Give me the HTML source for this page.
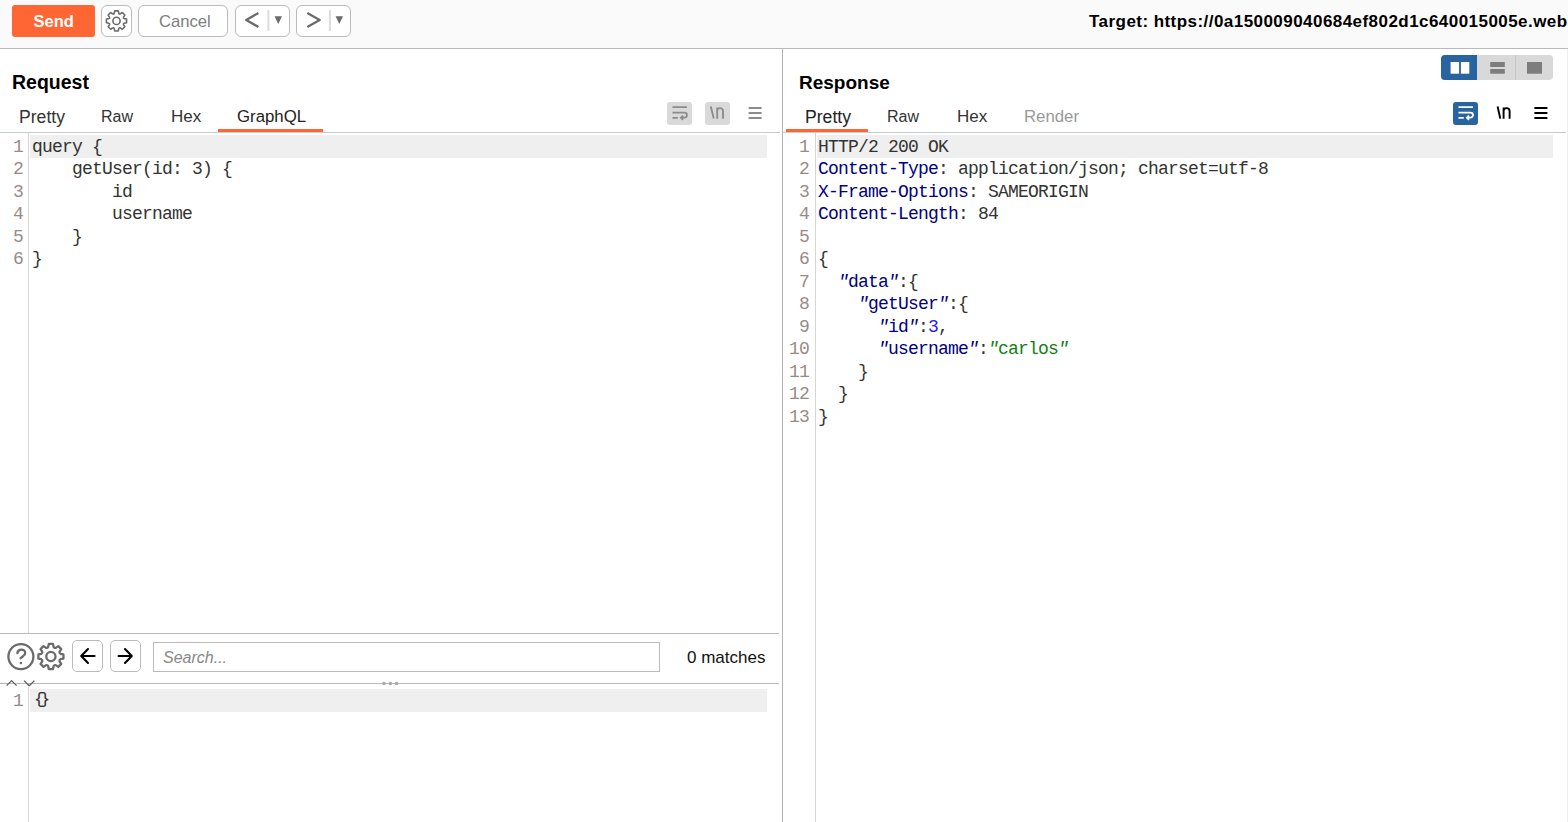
<!DOCTYPE html>
<html><head><meta charset="utf-8">
<style>
*{box-sizing:border-box;margin:0;padding:0}
html,body{width:1568px;height:822px;overflow:hidden;background:#fff;font-family:"Liberation Sans",sans-serif;color:#222}
.a{position:absolute}
svg{position:absolute;left:0;top:0;overflow:visible}
#top{left:0;top:0;width:1568px;height:48px;background:#fafafa}
#topline{left:0;top:48px;width:1568px;height:1px;background:#bdb8b8}
.btn{position:absolute;top:5px;height:32px;border:1.5px solid #bfbaba;border-radius:6px;background:#fff}
.txt{position:absolute;white-space:pre;line-height:1}
.tab{position:absolute;top:109px;font-size:16px;white-space:pre;line-height:1;color:#333}
.code{position:absolute;font-family:"Liberation Mono",monospace;font-size:18px;letter-spacing:-0.8px;white-space:pre;line-height:22.5px;color:#333}
.ln{position:absolute;font-family:"Liberation Mono",monospace;font-size:18px;letter-spacing:-0.8px;white-space:pre;line-height:22.5px;color:#978b86;text-align:right}
.hl{position:absolute;background:#efefef}
.vline{position:absolute;width:1px;background:#d6d6d6}
.hn{color:#000080}
.k{color:#000080}
.nb{color:#1c1cf0}
.st{color:#108010}
.code i{font-style:italic}
</style></head><body>
<div class="a" id="top"></div>
<div class="a" id="topline"></div>

<!-- Send -->
<div class="a" style="left:12px;top:5px;width:83px;height:32px;background:#ff6633;border-radius:3px"></div>
<div class="txt" style="left:33.5px;top:12.8px;font-size:16.5px;font-weight:700;color:#fff">Send</div>
<!-- gear btn -->
<div class="btn" style="left:101px;width:31px"></div>
<!-- cancel -->
<div class="btn" style="left:138px;width:90px"></div>
<div class="txt" style="left:159px;top:13.5px;font-size:16.6px;color:#7e7e7e">Cancel</div>
<!-- back/fwd -->
<div class="btn" style="left:235px;width:55px"></div>
<div class="btn" style="left:296px;width:55px"></div>

<div class="txt" style="left:1089px;top:13px;font-size:17px;font-weight:700;color:#000;letter-spacing:0.45px">Target: https://0a150009040684ef802d1c640015005e.web</div>

<!-- Request pane -->
<div class="txt" style="left:12px;top:73px;font-size:19.5px;font-weight:700;color:#000">Request</div>
<div class="tab" style="left:19px;top:108.5px;font-size:17.6px">Pretty</div>
<div class="tab" style="left:101px">Raw</div>
<div class="tab" style="left:171px;font-size:17px;top:108px">Hex</div>
<div class="tab" style="left:237px;font-size:16.8px;top:108.5px;color:#222">GraphQL</div>
<div class="a" style="left:0;top:132px;width:780px;height:1px;background:#c9cccc"></div>
<div class="a" style="left:218px;top:129px;width:105px;height:3px;background:#ff6633"></div>

<div class="a" style="left:667px;top:102px;width:25px;height:23px;background:#d9d9d9;border-radius:3px"></div>
<div class="a" style="left:705px;top:102px;width:25px;height:23px;background:#d9d9d9;border-radius:3px"></div>

<div class="vline" style="left:28px;top:133px;height:500px"></div>
<div class="hl" style="left:30px;top:135px;width:737px;height:23px"></div>
<div class="ln" style="left:0;top:135.5px;width:23px">1
2
3
4
5
6</div>
<div class="code" style="left:32px;top:135.5px">query {
    getUser(id: 3) {
        id
        username
    }
}</div>

<!-- search bar -->
<div class="a" style="left:0;top:633px;width:779px;height:1px;background:#bdb8b8"></div>
<div class="a" style="left:0;top:683px;width:779px;height:1px;background:#bdb8b8"></div>
<div class="btn" style="left:72px;top:640px;width:31px;height:32px;border-radius:5px"></div>
<div class="btn" style="left:110px;top:640px;width:31px;height:32px;border-radius:5px"></div>
<div class="a" style="left:153px;top:642px;width:507px;height:30px;border:1.5px solid #bfbaba;background:#fff"></div>
<div class="txt" style="left:163px;top:650px;font-size:16px;font-style:italic;color:#888">Search...</div>
<div class="txt" style="left:687px;top:649px;font-size:17px;color:#111">0 matches</div>

<div class="vline" style="left:28px;top:687px;height:135px"></div>
<div class="hl" style="left:30px;top:689px;width:737px;height:23px"></div>
<div class="ln" style="left:0;top:689.5px;width:23px">1</div>
<div class="code" style="left:34px;top:689px;font-size:17.4px;letter-spacing:-4.6px">{}</div>

<!-- divider -->
<div class="a" style="left:782px;top:49px;width:1px;height:773px;background:#b8b3b3"></div>

<!-- Response pane -->
<div class="txt" style="left:799px;top:72.5px;font-size:19px;font-weight:700;color:#000">Response</div>
<div class="tab" style="left:805px;top:108.5px;font-size:17.6px;color:#222">Pretty</div>
<div class="tab" style="left:887px">Raw</div>
<div class="tab" style="left:957px;font-size:17px;top:108px">Hex</div>
<div class="tab" style="left:1024px;font-size:16.8px;top:108.5px;color:#999">Render</div>
<div class="a" style="left:783px;top:132px;width:783px;height:1px;background:#c9cccc"></div>
<div class="a" style="left:786px;top:129px;width:82px;height:3px;background:#ff6633"></div>

<div class="a" style="left:1441px;top:55px;width:112px;height:25px;background:#d9d9d9;border-radius:4px"></div>
<div class="a" style="left:1441px;top:55px;width:36px;height:25px;background:#28649f;border-radius:4px 0 0 4px"></div>
<div class="a" style="left:1515px;top:55px;width:1px;height:25px;background:#c6c6c6"></div>
<div class="a" style="left:1453px;top:102px;width:25px;height:23px;background:#28649f;border-radius:3px"></div>

<div class="vline" style="left:815px;top:133px;height:689px"></div>
<div class="hl" style="left:817px;top:135px;width:736px;height:23px"></div>
<div class="ln" style="left:783px;top:135.5px;width:26px">1
2
3
4
5
6
7
8
9
10
11
12
13</div>
<div class="code" style="left:818px;top:135.5px">HTTP/2 200 OK
<span class="hn">Content-Type</span>: application/json; charset=utf-8
<span class="hn">X-Frame-Options</span>: SAMEORIGIN
<span class="hn">Content-Length</span>: 84

{
  <span class="k"><i>"</i>data<i>"</i></span>:{
    <span class="k"><i>"</i>getUser<i>"</i></span>:{
      <span class="k"><i>"</i>id<i>"</i></span>:<span class="nb">3</span>,
      <span class="k"><i>"</i>username<i>"</i></span>:<span class="st"><i>"</i>carlos<i>"</i></span>
    }
  }
}</div>

<div class="a" style="left:1567px;top:49px;width:1px;height:773px;background:#f0f0f0"></div>
<!-- ICONS -->
<svg width="1568" height="822" viewBox="0 0 1568 822">
 <!-- top gear -->
 <g transform="translate(116.5 20.9)" fill="none" stroke="#6b6b6b" stroke-width="1.6" stroke-linejoin="round">
  <path d="M-2.31 -7.55 L-1.77 -10.05 L1.77 -10.05 L2.31 -7.55 Q2.72 -6.57 3.71 -6.98 L5.85 -8.36 L8.36 -5.85 L6.98 -3.71 Q6.57 -2.72 7.55 -2.31 L10.05 -1.77 L10.05 1.77 L7.55 2.31 Q6.57 2.72 6.98 3.71 L8.36 5.85 L5.85 8.36 L3.71 6.98 Q2.72 6.57 2.31 7.55 L1.77 10.05 L-1.77 10.05 L-2.31 7.55 Q-2.72 6.57 -3.71 6.98 L-5.85 8.36 L-8.36 5.85 L-6.98 3.71 Q-6.57 2.72 -7.55 2.31 L-10.05 1.77 L-10.05 -1.77 L-7.55 -2.31 Q-6.57 -2.72 -6.98 -3.71 L-8.36 -5.85 L-5.85 -8.36 L-3.71 -6.98 Q-2.72 -6.57 -2.31 -7.55 Z"/><circle r="3.6"/>
 </g>
 <!-- back / fwd chevrons -->
 <g fill="none" stroke="#6b6b6b" stroke-width="2.3" stroke-linecap="butt" stroke-linejoin="round">
  <path d="M258.4 13 L246.2 19.9 L258.4 27"/>
  <path d="M307.3 13 L319.7 19.9 L307.3 27"/>
 </g>
 <g fill="#dcdcdc"><rect x="267.4" y="10" width="2" height="21"/><rect x="328.9" y="10" width="2" height="21"/></g>
 <g fill="#6b6b6b"><path d="M274.6 16.3 H282 L278.3 24 Z"/><path d="M335.6 16.3 H343 L339.3 24 Z"/></g>

 <!-- request toolbar icons (grey) -->
 <g transform="translate(667 102)" fill="none" stroke="#8c8c8c" stroke-width="1.8">
  <path d="M5.5 5.2H19.9 M5.5 10.7H17.5 A2.5 2.5 0 0 1 17.5 15.7 H14.2 M16 13.6 L13.9 15.7 L16 17.8 M5.5 15.9H10.8"/>
 </g>
 <g transform="translate(705 102)" fill="none" stroke="#8c8c8c" stroke-width="1.9">
  <path d="M5.8 4.5 L8.8 16.6"/>
  <path d="M12.2 16.8 V5.5 M12.2 9 C12.2 5.2 18 5.2 18 9 V16.8"/>
 </g>
 <g fill="#8c8c8c"><rect x="748.6" y="107" width="13" height="2"/><rect x="748.6" y="112" width="13" height="2"/><rect x="748.6" y="117" width="13" height="2"/></g>

 <!-- response toolbar icons -->
 <g transform="translate(1453 102)" fill="none" stroke="#fff" stroke-width="1.8">
  <path d="M5.5 5.2H19.9 M5.5 10.7H17.5 A2.5 2.5 0 0 1 17.5 15.7 H14.2 M16 13.6 L13.9 15.7 L16 17.8 M5.5 15.9H10.8"/>
 </g>
 <g transform="translate(1491 102)" fill="none" stroke="#000" stroke-width="1.9">
  <path d="M6.6 4.5 L9.3 16.6"/>
  <path d="M12.6 16.8 V5.5 M12.6 9 C12.6 5.2 18.6 5.2 18.6 9 V16.8"/>
 </g>
 <g fill="#000"><rect x="1534.4" y="107" width="13" height="2"/><rect x="1534.4" y="112" width="13" height="2"/><rect x="1534.4" y="117" width="13" height="2"/></g>

 <!-- layout toggle icons -->
 <g fill="#fff"><rect x="1450.6" y="62" width="8.5" height="11.7"/><rect x="1460.9" y="62" width="8.4" height="11.7"/></g>
 <g fill="#7d7d7d"><rect x="1490.2" y="62" width="14.6" height="5"/><rect x="1490.2" y="69" width="14.6" height="4.7"/><rect x="1527" y="62" width="15" height="11.7"/></g>

 <!-- search bar icons -->
 <g fill="none" stroke="#6b6b6b" stroke-width="2.3">
  <circle cx="20.9" cy="656.6" r="12.5"/>
  <path d="M17.4 653.2 C17.8 648.5 25.2 648.5 25.2 653 C25.2 656 22 656.5 20.6 658.2" stroke-linecap="round"/>
 </g>
 <circle cx="20.9" cy="663" r="1.3" fill="#6b6b6b"/>
 <g transform="translate(50.9 656.5)" fill="none" stroke="#6b6b6b" stroke-width="2.3" stroke-linejoin="round">
  <path d="M-2.73 -9.52 L-2.10 -12.53 L2.10 -12.53 L2.73 -9.52 Q3.41 -8.23 4.80 -8.66 L7.37 -10.34 L10.34 -7.37 L8.66 -4.80 Q8.23 -3.41 9.52 -2.73 L12.53 -2.10 L12.53 2.10 L9.52 2.73 Q8.23 3.41 8.66 4.80 L10.34 7.37 L7.37 10.34 L4.80 8.66 Q3.41 8.23 2.73 9.52 L2.10 12.53 L-2.10 12.53 L-2.73 9.52 Q-3.41 8.23 -4.80 8.66 L-7.37 10.34 L-10.34 7.37 L-8.66 4.80 Q-8.23 3.41 -9.52 2.73 L-12.53 2.10 L-12.53 -2.10 L-9.52 -2.73 Q-8.23 -3.41 -8.66 -4.80 L-10.34 -7.37 L-7.37 -10.34 L-4.80 -8.66 Q-3.41 -8.23 -2.73 -9.52 Z"/><circle r="4.6"/>
 </g>
 <g fill="none" stroke="#000" stroke-width="2.1" stroke-linecap="round" stroke-linejoin="round">
  <path d="M81.4 656 H94.6 M88 649 L81.2 656 L88 663"/>
  <path d="M118.6 656 H131.6 M125 649 L131.8 656 L125 663"/>
 </g>
 <g fill="#a9a9a9"><circle cx="384" cy="683.5" r="1.8"/><circle cx="390.4" cy="683.5" r="1.8"/><circle cx="396.6" cy="683.5" r="1.8"/></g>
 <g fill="none" stroke="#5e5e5e" stroke-width="1.3" stroke-linejoin="round">
  <path d="M6.6 685.6 L11.6 680.6 L16.6 685.6"/>
  <path d="M24 680.6 L28.6 685.2 Q29.2 685.8 29.8 685.2 L34.4 680.6"/>
 </g>
</svg>

</body></html>
